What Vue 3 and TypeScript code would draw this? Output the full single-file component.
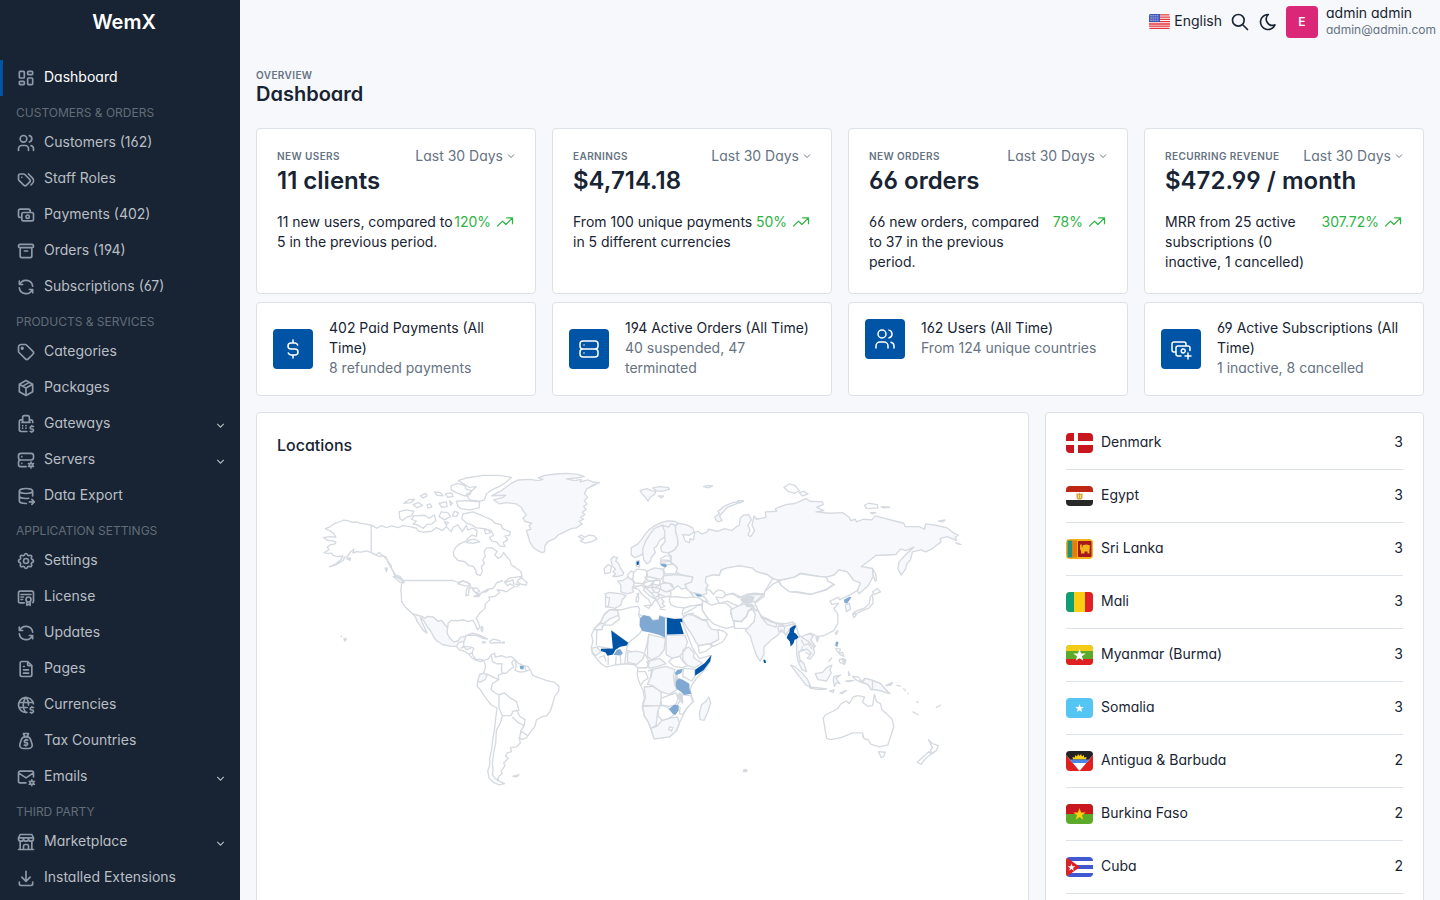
<script setup lang="ts">
import { ref } from 'vue'

interface NavItem { label: string; icon: string; active?: boolean; expandable?: boolean }
interface NavGroup { title: string; items: NavItem[] }
interface Stat { label: string; value: string; text: string; change: string }
interface Total { icon: string; title: string; detail: string }
interface Country { code: string; name: string; count: number }
interface Shape { d: string; kind: string }

const icons: Record<string, string> = {
  dashboard: 'M5 4h4a1 1 0 0 1 1 1v6a1 1 0 0 1 -1 1h-4a1 1 0 0 1 -1 -1v-6a1 1 0 0 1 1 -1 M5 16h4a1 1 0 0 1 1 1v2a1 1 0 0 1 -1 1h-4a1 1 0 0 1 -1 -1v-2a1 1 0 0 1 1 -1 M15 12h4a1 1 0 0 1 1 1v6a1 1 0 0 1 -1 1h-4a1 1 0 0 1 -1 -1v-6a1 1 0 0 1 1 -1 M15 4h4a1 1 0 0 1 1 1v2a1 1 0 0 1 -1 1h-4a1 1 0 0 1 -1 -1v-2a1 1 0 0 1 1 -1',
  users: 'M9 7m-4 0a4 4 0 1 0 8 0a4 4 0 1 0 -8 0 M3 21v-2a4 4 0 0 1 4 -4h4a4 4 0 0 1 4 4v2 M16 3.13a4 4 0 0 1 0 7.75 M21 21v-2a4 4 0 0 0 -3 -3.85',
  tags: 'M3 8v4.172a2 2 0 0 0 .586 1.414l5.71 5.71a2.41 2.41 0 0 0 3.408 0l3.592 -3.592a2.41 2.41 0 0 0 0 -3.408l-5.71 -5.71a2 2 0 0 0 -1.414 -.586h-4.172a2 2 0 0 0 -2 2z M18 19l1.592 -1.592a4.82 4.82 0 0 0 0 -6.816l-4.592 -4.592 M7 10h-.01',
  cash: 'M7 11a2 2 0 0 1 2 -2h10a2 2 0 0 1 2 2v6a2 2 0 0 1 -2 2h-10a2 2 0 0 1 -2 -2z M12 14a2 2 0 1 0 4 0a2 2 0 1 0 -4 0 M17 9v-2a2 2 0 0 0 -2 -2h-10a2 2 0 0 0 -2 2v6a2 2 0 0 0 2 2h2',
  archive: 'M3 6a2 2 0 0 1 2 -2h14a2 2 0 0 1 2 2a2 2 0 0 1 -2 2h-14a2 2 0 0 1 -2 -2z M5 8v10a2 2 0 0 0 2 2h10a2 2 0 0 0 2 -2v-10 M10 12l4 0',
  refresh: 'M20 11a8.1 8.1 0 0 0 -15.5 -2m-.5 -4v4h4 M4 13a8.1 8.1 0 0 0 15.5 2m.5 4v-4h-4',
  tag: 'M6.5 7.5a1 1 0 1 0 2 0a1 1 0 1 0 -2 0 M3 6v5.172a2 2 0 0 0 .586 1.414l7.71 7.71a2.41 2.41 0 0 0 3.408 0l5.592 -5.592a2.41 2.41 0 0 0 0 -3.408l-7.71 -7.71a2 2 0 0 0 -1.414 -.586h-5.172a3 3 0 0 0 -3 3z',
  package: 'M12 3l8 4.5l0 9l-8 4.5l-8 -4.5l0 -9l8 -4.5 M12 12l8 -4.5 M12 12l0 9 M12 12l-8 -4.5 M16 5.25l-8 4.5',
  register: 'M21 15h-2.5a1.5 1.5 0 0 0 0 3h1a1.5 1.5 0 0 1 0 3h-2.5 M19 21v1m0 -8v1 M13 21h-7a2 2 0 0 1 -2 -2v-10a2 2 0 0 1 2 -2h2m12 3.12v-1.12a2 2 0 0 0 -2 -2h-2 M16 10v-6a2 2 0 0 0 -2 -2h-4a2 2 0 0 0 -2 2v6m8 0h-8m8 0h1m-9 0h-1 M8 14v.01 M8 17v.01 M12 13.99v.01 M12 17v.01',
  serverCog: 'M3 7a3 3 0 0 1 3 -3h12a3 3 0 0 1 3 3v2a3 3 0 0 1 -3 3h-12a3 3 0 0 1 -3 -3z M12 20h-6a3 3 0 0 1 -3 -3v-2a3 3 0 0 1 3 -3h10.5 M16 18a2 2 0 1 0 4 0a2 2 0 1 0 -4 0 M18 14.5v1.5 M18 20v1.5 M21.032 16.25l-1.299 .75 M16.27 19l-1.3 .75 M14.97 16.25l1.3 .75 M19.733 19l1.3 .75 M7 8v.01 M7 16v.01',
  databaseExport: 'M4 6c0 1.657 3.582 3 8 3s8 -1.343 8 -3s-3.582 -3 -8 -3s-8 1.343 -8 3 M4 6v6c0 1.657 3.582 3 8 3c1.118 0 2.183 -.086 3.15 -.241 M20 12v-6 M4 12v6c0 1.657 3.582 3 8 3c.157 0 .312 -.002 .466 -.005 M16 19h6 M19 16l3 3l-3 3',
  settings: 'M10.325 4.317c.426 -1.756 2.924 -1.756 3.35 0a1.724 1.724 0 0 0 2.573 1.066c1.543 -.94 3.31 .826 2.37 2.37a1.724 1.724 0 0 0 1.065 2.572c1.756 .426 1.756 2.924 0 3.35a1.724 1.724 0 0 0 -1.066 2.573c.94 1.543 -.826 3.31 -2.37 2.37a1.724 1.724 0 0 0 -2.572 1.065c-.426 1.756 -2.924 1.756 -3.35 0a1.724 1.724 0 0 0 -2.573 -1.066c-1.543 .94 -3.31 -.826 -2.37 -2.37a1.724 1.724 0 0 0 -1.065 -2.572c-1.756 -.426 -1.756 -2.924 0 -3.35a1.724 1.724 0 0 0 1.066 -2.573c-.94 -1.543 .826 -3.31 2.37 -2.37c1 .608 2.296 .07 2.572 -1.065z M9 12a3 3 0 1 0 6 0a3 3 0 0 0 -6 0',
  certificate: 'M12 15a3 3 0 1 0 6 0a3 3 0 1 0 -6 0 M13 17.5v4.5l2 -1.5l2 1.5v-4.5 M10 19h-5a2 2 0 0 1 -2 -2v-10c0 -1.1 .9 -2 2 -2h14a2 2 0 0 1 2 2v10a2 2 0 0 1 -1 1.73 M6 9l12 0 M6 12l3 0 M6 15l2 0',
  file: 'M14 3v4a1 1 0 0 0 1 1h4 M17 21h-10a2 2 0 0 1 -2 -2v-14a2 2 0 0 1 2 -2h7l5 5v11a2 2 0 0 1 -2 2z M9 9l1 0 M9 13l6 0 M9 17l6 0',
  worldDollar: 'M20.876 10.51a9 9 0 1 0 -7.839 10.43 M3.6 9h16.8 M3.6 15h9.9 M11.5 3a17 17 0 0 0 0 18 M12.5 3a16.99 16.99 0 0 1 2.578 9.02 M21 15h-2.5a1.5 1.5 0 0 0 0 3h1a1.5 1.5 0 0 1 0 3h-2.5 M19 21v1m0 -8v1',
  tax: 'M8.487 21h7.026a4 4 0 0 0 3.808 -5.224l-1.706 -5.306a5 5 0 0 0 -4.76 -3.47h-1.71a5 5 0 0 0 -4.76 3.47l-1.706 5.306a4 4 0 0 0 3.808 5.224 M15 3q-1 4 -3 4t-3 -4z M14 11h-2.5a1.5 1.5 0 0 0 0 3h1a1.5 1.5 0 0 1 0 3h-2.5 M12 10v1 M12 17v1',
  mailCog: 'M12 19h-7a2 2 0 0 1 -2 -2v-10a2 2 0 0 1 2 -2h14a2 2 0 0 1 2 2v5 M3 7l9 6l9 -6 M17 19a2 2 0 1 0 4 0a2 2 0 1 0 -4 0 M19 15.5v1.5 M19 21v1.5 M22.03 17.25l-1.3 .75 M17.27 20l-1.3 .75 M15.97 17.25l1.3 .75 M20.73 20l1.3 .75',
  store: 'M3 21l18 0 M3 7v1a3 3 0 0 0 6 0v-1m0 1a3 3 0 0 0 6 0v-1m0 1a3 3 0 0 0 6 0v-1h-18l2 -4h14l2 4 M5 21l0 -10.15 M19 21l0 -10.15 M9 21v-4a2 2 0 0 1 2 -2h2a2 2 0 0 1 2 2v4',
  download: 'M4 17v2a2 2 0 0 0 2 2h12a2 2 0 0 0 2 -2v-2 M7 11l5 5l5 -5 M12 4l0 12',
  search: 'M3 10a7 7 0 1 0 14 0a7 7 0 1 0 -14 0 M21 21l-6 -6',
  moon: 'M12 3c.132 0 .263 0 .393 0a7.5 7.5 0 0 0 7.92 12.446a9 9 0 1 1 -8.313 -12.454z',
  trending: 'M3 17l6 -6l4 4l8 -8 M14 7l7 0l0 7',
  dollar: 'M16.7 8a3 3 0 0 0 -2.7 -2h-4a3 3 0 0 0 0 6h4a3 3 0 0 1 0 6h-4a3 3 0 0 1 -2.7 -2 M12 3v3m0 12v3',
  server: 'M3 7a3 3 0 0 1 3 -3h12a3 3 0 0 1 3 3v2a3 3 0 0 1 -3 3h-12a3 3 0 0 1 -3 -3z M3 15a3 3 0 0 1 3 -3h12a3 3 0 0 1 3 3v2a3 3 0 0 1 -3 3h-12a3 3 0 0 1 -3 -3z M7 8v.01 M7 16v.01',
  cashPlus: 'M12 19h-3a2 2 0 0 1 -2 -2v-6a2 2 0 0 1 2 -2h10a2 2 0 0 1 2 2v2.5 M17 9v-2a2 2 0 0 0 -2 -2h-10a2 2 0 0 0 -2 2v6a2 2 0 0 0 2 2h2 M12.25 14a2 2 0 1 0 3.5 -1.4a2 2 0 0 0 -3.5 1.4a2 2 0 0 0 2 2 M16 19h6 M19 16v6',
  chevron: 'M6 9l6 6l6 -6',
}

const nav: NavGroup[] = [
  { title: '', items: [{ label: 'Dashboard', icon: 'dashboard', active: true }] },
  {
    title: 'Customers & Orders',
    items: [
      { label: 'Customers (162)', icon: 'users' },
      { label: 'Staff Roles', icon: 'tags' },
      { label: 'Payments (402)', icon: 'cash' },
      { label: 'Orders (194)', icon: 'archive' },
      { label: 'Subscriptions (67)', icon: 'refresh' },
    ],
  },
  {
    title: 'Products & Services',
    items: [
      { label: 'Categories', icon: 'tag' },
      { label: 'Packages', icon: 'package' },
      { label: 'Gateways', icon: 'register', expandable: true },
      { label: 'Servers', icon: 'serverCog', expandable: true },
      { label: 'Data Export', icon: 'databaseExport' },
    ],
  },
  {
    title: 'Application Settings',
    items: [
      { label: 'Settings', icon: 'settings' },
      { label: 'License', icon: 'certificate' },
      { label: 'Updates', icon: 'refresh' },
      { label: 'Pages', icon: 'file' },
      { label: 'Currencies', icon: 'worldDollar' },
      { label: 'Tax Countries', icon: 'tax' },
      { label: 'Emails', icon: 'mailCog', expandable: true },
    ],
  },
  {
    title: 'Third Party',
    items: [
      { label: 'Marketplace', icon: 'store', expandable: true },
      { label: 'Installed Extensions', icon: 'download' },
    ],
  },
]

const period = ref('Last 30 Days')

const stats: Stat[] = [
  { label: 'New users', value: '11 clients', text: '11 new users, compared to 5 in the previous period.', change: '120%' },
  { label: 'Earnings', value: '$4,714.18', text: 'From 100 unique payments in 5 different currencies', change: '50%' },
  { label: 'New orders', value: '66 orders', text: '66 new orders, compared to 37 in the previous period.', change: '78%' },
  { label: 'Recurring revenue', value: '$472.99 / month', text: 'MRR from 25 active subscriptions (0 inactive, 1 cancelled)', change: '307.72%' },
]

const totals: Total[] = [
  { icon: 'dollar', title: '402 Paid Payments (All Time)', detail: '8 refunded payments' },
  { icon: 'server', title: '194 Active Orders (All Time)', detail: '40 suspended, 47 terminated' },
  { icon: 'users', title: '162 Users (All Time)', detail: 'From 124 unique countries' },
  { icon: 'cashPlus', title: '69 Active Subscriptions (All Time)', detail: '1 inactive, 8 cancelled' },
]

const countries: Country[] = [
  { code: 'dk', name: 'Denmark', count: 3 },
  { code: 'eg', name: 'Egypt', count: 3 },
  { code: 'lk', name: 'Sri Lanka', count: 3 },
  { code: 'ml', name: 'Mali', count: 3 },
  { code: 'mm', name: 'Myanmar (Burma)', count: 3 },
  { code: 'so', name: 'Somalia', count: 3 },
  { code: 'ag', name: 'Antigua & Barbuda', count: 2 },
  { code: 'bf', name: 'Burkina Faso', count: 2 },
  { code: 'cu', name: 'Cuba', count: 2 },
]

/* kind: w = no data, g = one visitor, l = two visitors, b = three visitors, n = border line */
const americas: Shape[] = [
  { kind: 'w', d: 'M184 196L165 192 150 190 140 186 125 187 114 182 100 181 85 187 70 193 58 202 46 206 62 214 72 222 78 232 60 230 40 233 52 241 70 243 78 247 75 252 60 255 52 262 57 270 42 278 55 281 65 280 70 287 85 290 99 288 93 300 78 312 58 321 80 314 100 302 104 292 112 290 120 278 132 268 129 280 140 275 155 277 170 273 184 278 200 285 208 278 218 287 228 291 234 305 243 315 246 328 256 344 270 350 280 362 275 375 273 390 275 410 275 425 285 440 297 452 310 463 330 468 345 475 355 470 370 472 385 485 395 482 405 495 414 504 415 490 425 482 445 483 460 480 475 485 490 482 497 495 503 510 511 503 505 485 499 476 510 460 527 445 526 433 540 420 537 412 555 410 570 398 562 390 578 392 590 396 605 386 615 380 602 372 594 378 584 366 600 355 618 352 637 350 634 335 620 325 605 315 600 300 590 290 582 278 575 290 565 295 555 285 562 275 545 263 530 265 523 275 527 290 519 300 524 312 515 320 518 335 512 347 500 343 498 330 490 320 475 316 465 305 445 302 432 288 431 275 438 262 450 252 470 243 475 235 487 225 500 230 502 212 490 205 474 210 470 196 458 215 444 195 430 202 424 216 410 200 398 212 380 203 366 214 340 217 325 213 320 205 300 200 280 197 265 203 245 198 230 203 215 197 200 205 190 198Z' },
  { kind: 'n', d: 'M184 196V278 M188 280L206 290 220 288 232 300 240 318 250 334 254 346 276 358M280 362H430L445 368 458 364 472 368 482 376 476 382 470 390 468 408 476 406 478 388 486 382 490 390 498 398 504 404 495 410M504 404L520 398 534 388 550 386 562 368 580 362' },
  { kind: 'n', d: 'M444 372L460 362 478 370 482 378 466 378Z M488 386L500 384 510 394 500 400 494 396Z M492 410L512 404 508 410Z M518 396L536 390 530 396Z M588 368L610 360 612 372 630 374 618 382' },
  { kind: 'w', d: 'M622 366L634 352 642 360 652 368 650 376 636 374Z M226 325L232 324 230 336Z M250 350L262 352 284 368 272 368Z M110 296L122 294 120 302Z' },
  { kind: 'w', d: 'M268 155L290 150 312 154 305 168 290 172 278 182 270 176Z M312 168L345 166 358 175 374 165 378 182 366 192 352 194 340 205 325 196 310 192 320 184 305 178Z M388 170L394 156 414 158 422 170 404 180Z M428 168L434 154 446 158 440 170Z M282 130L296 120 314 118 304 128Z M310 134L326 128 338 136 322 143Z M332 108L348 100 352 108 340 114Z M374 96L392 98 400 108 382 106Z M352 134L362 132 366 142 354 144Z M388 130L410 126 412 140 396 142Z M420 122L428 130 422 136Z M406 102L425 98 430 110 414 112Z M404 185L416 188 410 196Z' },
  { kind: 'w', d: 'M424 78L444 70 464 76 470 88 486 92 480 104 464 108 440 98 424 90Z M446 62L470 54 520 46 570 46 605 52 590 66 568 80 546 90 530 102 524 120 508 124 480 120 470 104 482 96 500 80 478 82Z M440 124L470 122 510 126 508 144 480 150 452 146 444 138Z M470 160L490 156 510 164 528 172 546 180 556 190 574 194 578 206 602 216 600 226 586 228 594 240 580 248 586 260 570 258 560 246 546 244 540 232 552 226 544 212 524 206 500 204 488 196 470 190 456 176 460 162Z M524 210L536 210 542 218 528 222Z M480 240L496 238 510 246 492 250 470 248Z' },
  { kind: 'g', d: 'M310 463L330 468 345 475 355 470 370 472 385 485 395 482 405 495 413 504 412 520 420 535 432 547 445 543 452 532 468 530 464 543 455 552 440 560 425 560 400 555 380 543 372 532 364 516 352 500 340 480 332 474 338 490 352 520 340 512 330 496 322 486 318 474Z' },
  { kind: 'w', d: 'M440 560L448 548 462 545 462 560 484 562 492 566 487 580 492 592 502 600 510 598 522 602 512 606 500 602 488 596 476 582 462 574 448 570Z' },
  { kind: 'n', d: 'M452 566L462 560 470 570 484 566M476 582L488 580' },
  { kind: 'w', d: 'M468 528L488 520 510 526 534 538 520 536 500 527 484 526Z M540 544L552 538 570 543 572 549 556 549 542 550Z M518 546L528 548 520 550Z M577 547H584V550H577Z M516 500L520 504 518 516 514 510Z' },
  { kind: 'w', d: 'M522 602L535 598 545 585 555 580 556 592 575 588 590 593 605 590 612 596 625 610 640 617 655 620 663 632 668 646 690 655 710 662 735 668 748 680 747 695 735 710 730 730 723 752 712 768 695 772 680 782 676 800 662 818 650 835 637 840 628 834 632 850 620 862 602 864 606 876 592 880 588 890 596 896 582 910 586 918 574 935 578 942 568 950 562 962 585 972 568 976 550 968 538 955 534 935 540 915 540 895 546 870 549 840 555 805 558 775 562 745 545 736 532 720 518 700 512 690 502 680 504 664 510 656 510 645 522 640 528 620Z' },
  { kind: 'g', d: 'M510 645L522 640 532 648 526 660 510 668 504 662Z' },
  { kind: 'n', d: 'M545 586L548 606 560 612 577 612 575 630 578 642 566 646 567 660 550 652 530 642M578 640L590 641 600 630 612 622 606 608 616 598M616 600L620 618 616 632 632 637 646 636 660 630M644 618L650 634M567 660L548 672 544 690 556 700 568 705 568 744 578 768 572 790 560 812 558 850 552 880 548 910 550 930 548 945 558 958 568 960M568 705L585 700 600 714 620 725 628 752 610 755 604 768 576 768M606 756L622 752 630 770 646 780 644 797 626 790 608 772M644 797L634 812 630 834M634 814L654 828' },
  { kind: 'l', d: 'M630 618L642 618 642 629 632 629Z' },
  { kind: 'g', d: 'M545 108L575 92 605 70 625 60 660 58 685 62 700 58 686 54 705 46 740 42 770 40 805 43 824 50 800 54 770 57 795 62 815 58 812 66 835 60 850 66 870 68 845 78 858 74 832 86 825 100 834 112 824 122 832 132 822 140 830 148 818 158 826 164 812 172 822 178 808 184 818 192 800 204 785 206 765 216 748 224 735 236 715 245 706 258 705 275 698 278 684 272 670 262 660 245 655 226 650 212 664 208 658 198 666 190 645 184 640 175 650 165 640 152 635 142 620 132 590 128 570 132 552 120 580 112 588 106Z' },
  { kind: 'w', d: 'M806 230L816 226 824 232 840 226 854 228 862 238 845 246 826 250 812 242 822 238Z M92 528L96 532M102 536L110 538 104 544Z M610 950L628 946 620 952Z' },
]

const africaEurope: Shape[] = [
  { kind: 'g', d: 'M242 92L262 86 275 92 290 94 284 104 272 112 266 124 256 110 246 100Z M280 84L300 80 326 82 330 88 306 94 290 92Z M296 108L312 108 306 114Z M432 80L446 76 460 78 446 84Z M470 180L466 172 480 160 476 154 496 138 520 128 552 122 530 132 504 142 490 158 480 168 488 182 476 186Z' },
  { kind: 'g', d: 'M215 264L235 252 245 240 258 222 270 208 285 198 305 188 325 183 345 184 357 190 348 198 348 215 354 235 355 255 345 270 325 280 306 275 304 260 318 244 314 232 300 242 292 258 283 266 288 278 276 292 272 305 262 312 253 300 250 282 240 288 225 293 215 285Z' },
  { kind: 'n', d: 'M250 284L250 265 258 245 270 225 284 206 308 196M308 196L316 215 316 234M308 196L328 202 334 192 348 196' },
  { kind: 'w', d: 'M304 296L318 288 332 288 334 304 322 306 304 306Z M304 300L330 302 336 312 322 320 302 312Z' },
  { kind: 'g', d: 'M154 298L162 290 174 294 168 304 178 312 182 324 192 338 190 346 174 350 160 350 168 342 160 336 168 328 158 318Z' },
  { kind: 'w', d: 'M134 326L146 314 156 320 152 338 136 342Z' },
  { kind: 'w', d: 'M204 346L214 334 222 336 220 358 208 356Z M222 340L232 328 256 330 262 336 262 354 250 372 228 370 220 360Z M230 318L230 304 240 302 240 322Z M250 372L262 366 282 362 282 374 264 380 246 380 222 378 222 370 238 370Z M256 352L276 348 294 356 284 364 266 362Z M274 374L286 362 302 362 300 376 284 384Z' },
  { kind: 'g', d: 'M174 364L190 362 204 352 220 362 224 372 218 386 222 396 204 402 184 396 184 376Z M136 402L150 398 186 402 200 408 188 420 184 436 166 446 150 442 140 442 144 420Z M262 334L286 324 310 328 314 346 306 358 290 356 264 350Z M304 372L328 368 344 388 318 396 302 388Z' },
  { kind: 'w', d: 'M138 412L150 414 146 440 138 440Z M312 328L324 314 344 314 354 326 348 342 316 342Z' },
  { kind: 'g', d: 'M312 348L350 344 362 346 400 352 396 366 376 374 382 384 366 388 356 378 344 386 336 372 310 366Z' },
  { kind: 'w', d: 'M222 384L246 376 256 384 252 390 268 406 290 420 284 424 276 438 268 420 248 404 236 388Z M254 438L274 436 268 446Z M230 412L238 412 236 426 230 426Z M232 402L238 400 236 410Z' },
  { kind: 'g', d: 'M258 384L276 382 300 386 318 396 334 394 334 408 316 412 304 414 314 426 308 430 316 440 304 444 296 430 288 416 276 400Z' },
  { kind: 'n', d: 'M276 382L284 396 276 400M284 396L296 400 302 388M288 414L300 404 316 410M296 400L300 414 290 424M250 372L262 384M282 374L300 376M300 448L318 450' },
  { kind: 'w', d: 'M330 412L346 410 378 414 410 410 426 416 432 432 410 436 394 438 376 444 352 442 336 436 330 424Z M372 448L382 446 376 452Z' },
  { kind: 'g', d: 'M392 398L420 402 436 412 446 426 432 424 418 414 404 412Z' },
  { kind: 'l', d: 'M406 402L424 405 428 410 414 410Z M304 311L320 312 322 320 314 322 304 316Z' },
  { kind: 'w', d: 'M440 352L460 345 480 347 486 330 504 324 540 318 580 325 590 335 625 345 640 357 618 392 614 402 585 400 560 404 544 412 520 400 500 406 492 394 478 390 468 396 462 404 452 392 440 388 446 376 438 366Z' },
  { kind: 'w', d: 'M470 412L490 414 500 406 520 402 540 414 556 410 566 420 548 430 540 440 520 432 504 424 490 428 480 432Z' },
  { kind: 'g', d: 'M546 414L570 404 612 404 590 424 574 428 560 424Z' },
  { kind: 'w', d: 'M430 422L444 430 458 436 476 430 500 430 516 444 514 462 522 480 526 500 500 506 482 500 462 492 448 478 438 466 428 448Z' },
  { kind: 'g', d: 'M514 450L534 440 552 432 566 436 584 440 566 454 560 470 544 486 520 482Z' },
  { kind: 'w', d: 'M524 484L546 486 562 470 568 454 584 446 600 456 596 470 584 486 576 500 574 514 556 506 526 506Z' },
  { kind: 'w', d: 'M372 446L396 438 428 436 428 450 438 466 448 480 430 480 410 468 388 462 372 470 368 460Z' },
  { kind: 'n', d: 'M372 462L392 452 412 440M390 462L404 460' },
  { kind: 'g', d: 'M368 476L384 464 400 466 426 480 442 484 448 498 456 508 476 512 488 524 476 540 452 552 420 560 410 548 396 522 380 500Z' },
  { kind: 'w', d: 'M416 558L450 552 458 560 440 574 420 580Z M476 510L492 514 504 524 490 546 462 560 454 552 478 540Z' },
  { kind: 'w', d: 'M150 450L185 450 215 442 236 440 240 448 238 462 250 470 270 470 280 482 298 478 300 468 320 474 345 478 366 476 374 500 386 530 398 562 410 582 420 597 455 587 452 605 432 635 412 655 398 675 392 690 397 712 402 725 382 745 372 765 362 785 352 812 330 832 306 834 285 838 278 820 268 790 255 770 248 740 255 715 250 690 238 665 233 645 235 625 225 615 200 612 170 615 140 622 125 612 110 595 98 580 95 565 100 545 96 525 105 505 125 485 135 462Z' },
  { kind: 'g', d: 'M150 450L174 452 178 466 150 478 136 490 120 492 134 466Z M106 510L128 510 128 500 138 494 124 490 108 502Z M96 565L112 562 124 576 108 588 100 580Z M204 578L230 574 256 580 250 598 232 614 204 608Z M268 524L318 536 314 570 300 588 276 600 264 590 264 560Z M320 526L376 526 384 546 376 572 360 590 338 596 320 584Z M262 606L300 596 320 612 296 620 270 626Z M276 630L320 620 346 630 342 650 346 676 352 690 330 704 304 696 280 678 264 674 274 652Z M254 682L280 680 304 696 306 714 302 738 250 738 258 712Z M250 740L302 738 294 760 290 798 274 806 266 786 254 768Z M274 806L292 800 308 782 328 776 354 772 360 790 350 814 330 832 300 836 284 838Z M370 570L388 562 404 580 402 594 428 610 406 624 384 618 370 600Z' },
  { kind: 'w', d: 'M338 596L362 590 370 604 384 618 368 624 344 620 328 606Z M302 738L320 740 334 752 344 766 328 776 308 782 296 770 296 752Z M304 716L330 706 350 700 356 718 348 736 328 740 306 736Z M356 704L394 708 400 726 380 748 370 764 360 762 362 744 352 738 362 724Z M372 626L406 628 406 652 396 664 370 650Z M330 802L340 804 336 814 328 810Z' },
  { kind: 'n', d: 'M176 464L180 478 156 496 138 496M155 512L206 550 240 522 246 512M236 462L242 476M206 550L200 572 216 576M256 576L262 556 268 522M110 558L112 510M112 560L150 566M118 594L134 588 140 606M146 590L146 616M170 590L168 614M182 588L184 612M200 574L196 610M236 624L262 624 270 608 256 582M236 636L258 636 266 656 252 664 244 676M266 634L280 630 274 652M360 700L368 730' },
  { kind: 'd', d: 'M352 640L346 656 348 672 354 660Z M360 700L368 706 370 730 364 722Z' },
  { kind: 'g', d: 'M448 712L454 730 444 760 434 782 422 780 420 762 426 736 440 724Z' },
  { kind: 'l', d: 'M241 476L252 466 270 470 280 482 298 480 300 468 317 474 317 534 300 526 272 518 248 514 240 498Z M162 586L172 570 182 568 190 580 184 587Z M346 640L354 630 370 628 366 640 350 647Z M350 664L358 656 370 660 390 672 390 686 396 702 374 706 364 696 352 688 348 676Z M328 748L344 735 357 737 358 752 348 766 340 762Z' },
  { kind: 'b', d: 'M322 474L345 478 368 477 369 488 362 486 373 523 322 524Z M155 512L206 549 202 557 182 561 168 570 160 584 144 588 138 578 124 574 124 567 160 566Z M456 586L452 605 432 632 407 648 407 630 436 610Z M231 306L238 304 238 314 232 316Z' },
]

const russia: Shape[] = [
  { kind: 'g', d: 'M-185 190L-160 194 -140 204 -136 216 -150 226 -170 224 -162 244 -150 248 -148 236 -138 240 -134 218 -126 214 -112 222 -96 216 -94 208 -64 214 -44 206 -22 212 -8 200 0 196 2 176 12 166 28 164 36 180 26 196 32 210 26 226 34 230 46 212 38 196 44 168 52 178 80 172 78 156 112 154 108 146 140 134 170 130 186 122 200 116 212 124 250 126 252 134 232 142 254 152 230 156 270 160 310 158 330 172 334 182 348 178 352 186 372 178 398 180 408 168 440 176 470 184 494 190 498 200 540 200 556 208 560 192 590 196 624 204 642 218 658 226 648 232 652 242 624 230 602 236 606 246 580 266 560 276 545 270 520 276 514 300 502 314 500 326 486 346 476 326 480 306 500 284 524 262 500 272 484 268 470 284 410 287 388 304 366 320 400 326 402 350 388 376 360 402 354 392 362 370 344 362 324 336 300 330 284 346 262 352 240 350 184 340 166 352 120 362 100 356 84 344 50 336 40 326 0 318 -36 324 -54 330 -60 347 -80 345 -100 352 -102 366 -94 376 -100 388 -98 402 -116 406 -148 396 -160 386 -164 374 -144 366 -140 352 -178 344 -190 336 -188 322 -206 306 -204 290 -214 280 -195 270 -185 255 -186 235 -192 215 -192 198Z' },
]

const asiaPacific: Shape[] = [
  { kind: 'w', d: 'M400 326L410 344 412 362 408 364 402 346Z M134 82L150 72 166 76 180 92 166 100 146 94Z M180 98L192 94 206 102 190 108Z M376 136L388 130 414 134 416 144 382 146Z M426 140L452 142 434 144Z M394 158L410 158 400 162Z M598 184L618 180 610 186Z M650 248L666 254 656 252Z M-4 122L12 124 0 130Z' },
  { kind: 'w', d: 'M120 362L166 352 184 342 240 350 262 352 266 364 284 372 262 388 216 404 176 396 150 396 126 378Z' },
  { kind: 'w', d: 'M46 430L74 410 76 396 102 372 118 364 126 378 150 396 176 398 216 404 262 390 286 374 266 364 262 352 284 346 300 330 324 336 344 362 364 370 354 392 338 402 318 412 300 420 298 412 272 424 278 434 298 430 284 446 296 464 296 490 284 512 254 528 234 530 214 520 198 526 184 532 176 520 172 500 160 486 138 492 110 490 80 478 62 464Z' },
  { kind: 'g', d: 'M40 450L58 454 66 472 94 486 120 492 136 500 168 490 152 506 140 526 126 510 116 526 96 540 74 562 74 584 62 604 50 584 36 542 34 530 18 512 44 486 48 464Z' },
  { kind: 'n', d: 'M66 472L82 476 112 492 110 502 84 494Z M116 500L136 500 134 518 118 514Z M118 496L134 492' },
  { kind: 'd', d: 'M4 420L30 408 44 412 38 424 18 430Z M18 430L38 434 44 442 22 440Z' },
  { kind: 'g', d: 'M318 436L330 430 334 448 322 456Z' },
  { kind: 'w', d: 'M400 396L414 386 424 396 406 404Z M400 404L402 430 390 444 372 452 354 460 340 462 350 454 374 446 390 432 394 410Z M340 462L352 464 344 474Z M288 520L296 512 292 524Z M230 534L238 534 234 546Z' },
  { kind: 'l', d: 'M314 420L332 410 336 414 324 430 316 430Z M290 546L298 546 294 562 288 558Z' },
  { kind: 'g', d: 'M172 536L184 530 206 544 222 560 226 580 212 598 204 596 216 580 202 568 186 572 178 578 182 600 194 612 202 636 188 630 176 604 172 580Z M198 526L212 522 222 530 214 540 228 560 220 566' },
  { kind: 'n', d: 'M186 540L194 556 208 552 218 568M190 560L186 574 200 570M198 578L212 584M178 606L186 604' },
  { kind: 'g', d: 'M154 616L166 620 186 638 204 658 214 680 200 676 180 650Z M210 682L232 684 262 688 240 690 214 686Z M228 642L250 638 264 622 278 616 272 630 276 640 262 664 236 660Z M284 650L304 646 290 656 302 672 292 668 286 680 282 662Z' },
  { kind: 'w', d: 'M272 694L284 690 282 698Z M302 700L322 692 308 702Z M320 664L344 662 330 666Z M328 636L332 646 328 648Z M290 566L304 568 300 580 310 578 314 590 302 584 292 572Z M300 600L312 596 320 602 316 614 302 608Z M278 594L268 606M340 650L358 652 366 666 378 656 400 662 424 672 434 684 452 702 428 694 410 690 396 690 386 674 366 668 350 660Z M440 678L460 668 456 676Z M472 676L486 680M492 686L500 694M506 700L508 704' },
  { kind: 'g', d: 'M378 656L400 662 424 672 434 684 452 702 428 694 410 690 396 690 386 674 370 668Z' },
  { kind: 'n', d: 'M400 662V690M532 724L538 730M590 744L606 736M520 756L538 766' },
  { kind: 'd', d: 'M308 598L318 602 314 610Z M14 930H22V936H12Z M370 830L384 828 382 840Z' },
  { kind: 'w', d: 'M406 704L412 726 424 732 428 750 442 762 458 778 464 800 456 826 446 856 420 862 396 854 386 840 374 836 370 820 340 820 306 834 274 840 262 836 256 800 252 776 258 766 294 748 306 732 322 724 330 732 342 712 356 708 376 712 370 728 386 740 400 738Z M418 876L438 878 434 890 426 894Z M568 840L580 852 598 858 592 872 580 882 574 872 580 864Z M570 876L576 884 560 896 546 914 534 908 550 894Z' },
  { kind: 'b', d: 'M160 500L168 496 170 502 165 510 164 518 170 522 178 532 172 538 166 540 162 552 154 560 152 546 142 534 146 524 150 518 152 506Z M72 600L78 600 80 610 74 610Z' },
]

const mapLayers = [
  { offset: 99, shapes: americas },
  { offset: 1389, shapes: russia },
  { offset: 849, shapes: africaEurope },
  { offset: 1389, shapes: asiaPacific },
]

const star = 'M0 -5L1.2 -1.6 4.8 -1.5 1.9 .6 2.9 4 0 2 -2.9 4 -1.9 .6 -4.8 -1.5 -1.2 -1.6Z'
</script>

<template>
  <div class="layout">
    <aside class="sidebar">
      <a class="brand" href="#">WemX</a>
      <nav>
        <div v-for="group in nav" :key="group.title">
          <h2 v-if="group.title" class="nav-title">{{ group.title }}</h2>
          <a v-for="item in group.items" :key="item.label" href="#" class="nav-link" :class="{ active: item.active }">
            <svg class="icon" viewBox="0 0 24 24"><path :d="icons[item.icon]" /></svg>
            <span>{{ item.label }}</span>
            <svg v-if="item.expandable" class="chevron" viewBox="0 0 24 24"><path :d="icons.chevron" /></svg>
          </a>
        </div>
      </nav>
    </aside>

    <div class="page">
      <header class="topbar">
        <button class="language" type="button">
          <svg class="flag-us" viewBox="0 0 21 15">
            <rect width="21" height="15" rx="2" fill="#fff" />
            <path d="M1 .8H20M0 3.1H21M0 5.4H21M0 7.7H21M0 10H21M0 12.2H21M1 14.4H20" stroke="#e3343c" stroke-width="1.3" />
            <path d="M2 0H11V8H0V2A2 2 0 0 1 2 0Z" fill="#3e55b5" />
            <path d="M1.5 1.8H10M1.5 4H10M1.5 6.2H10" stroke="#c9d0f0" stroke-width=".8" stroke-dasharray="1 1.2" />
          </svg>
          <span>English</span>
        </button>
        <button class="icon-button" type="button" aria-label="Search"><svg viewBox="0 0 24 24"><path :d="icons.search" /></svg></button>
        <button class="icon-button" type="button" aria-label="Dark mode"><svg viewBox="0 0 24 24"><path :d="icons.moon" /></svg></button>
        <a class="account" href="#">
          <span class="avatar">E</span>
          <span class="who">
            <span class="name">admin admin</span>
            <span class="email">admin@admin.com</span>
          </span>
        </a>
      </header>

      <main>
        <div class="heading">
          <div class="subheader">Overview</div>
          <h1>Dashboard</h1>
        </div>

        <section class="grid stats">
          <article v-for="stat in stats" :key="stat.label" class="card stat">
            <div class="stat-top">
              <span class="subheader">{{ stat.label }}</span>
              <button class="period" type="button">
                {{ period }}<svg viewBox="0 0 24 24"><path :d="icons.chevron" /></svg>
              </button>
            </div>
            <div class="value">{{ stat.value }}</div>
            <div class="stat-body">
              <span>{{ stat.text }}</span>
              <span class="change">{{ stat.change }}<svg viewBox="0 0 24 24"><path :d="icons.trending" /></svg></span>
            </div>
          </article>
        </section>

        <section class="grid totals">
          <article v-for="total in totals" :key="total.title" class="card total">
            <div class="total-row">
              <span class="badge"><svg viewBox="0 0 24 24"><path :d="icons[total.icon]" /></svg></span>
              <div class="total-text">
                <div>{{ total.title }}</div>
                <div class="muted">{{ total.detail }}</div>
              </div>
            </div>
          </article>
        </section>

        <section class="bottom">
          <article class="card locations">
            <h3>Locations</h3>
            <svg class="map" viewBox="0 -9 2196 1250" role="img" aria-label="World map of visitors">
              <g v-for="(layer, i) in mapLayers" :key="i" :transform="`translate(${layer.offset} 0)`">
                <path v-for="(shape, j) in layer.shapes" :key="j" :d="shape.d" :class="'k-' + shape.kind" />
              </g>
            </svg>
          </article>

          <article class="card">
            <ul class="countries">
              <li v-for="c in countries" :key="c.code">
                <svg class="flag" viewBox="0 0 27 20">
                  <template v-if="c.code === 'dk'"><rect width="27" height="20" fill="#c8171e" /><path d="M0 10H27M10 0V20" stroke="#fff" stroke-width="4" /></template>
                  <template v-else-if="c.code === 'eg'"><rect width="27" height="20" fill="#fff" /><rect width="27" height="6" fill="#bf2714" /><rect y="14" width="27" height="6" fill="#282828" /><path d="M10.5 7L12.5 8 13.5 6.5 14.5 8 16.5 7 16.5 12 15 13.5H12L10.5 12Z" fill="#d8a43a" /><path d="M12.5 9V12M14.5 9V12" stroke="#f3dfa6" /></template>
                  <template v-else-if="c.code === 'lk'"><rect width="27" height="20" fill="#f5b31b" /><rect x="1.5" y="1.5" width="5" height="17" fill="#22907a" /><rect x="6.5" y="1.5" width="4.5" height="17" fill="#ec7a08" /><rect x="12" y="2" width="13.5" height="16" rx="1" fill="#a5181c" /><path d="M14 6L15.5 5 16 9 17 6 21 5.500 24 6.5 23.5 11 23.5 14.5H21.5V12.5H18.5V14.5H15V12L14 10Z" fill="#f5b31b" /></template>
                  <template v-else-if="c.code === 'ml'"><rect width="27" height="20" fill="#fccd10" /><rect width="8" height="20" fill="#0d9e74" /><rect x="19" width="8" height="20" fill="#e01f26" /></template>
                  <template v-else-if="c.code === 'mm'"><rect width="27" height="20" fill="#5caa2a" /><rect width="27" height="6" fill="#f4cb16" /><rect y="14" width="27" height="6" fill="#e02020" /><path :d="star" transform="translate(13.5 10.5) scale(1.3)" fill="#fff" /></template>
                  <template v-else-if="c.code === 'so'"><rect width="27" height="20" fill="#55c5f3" /><path :d="star" transform="translate(13.5 10.5) scale(.9)" fill="#fff" /></template>
                  <template v-else-if="c.code === 'ag'"><rect width="27" height="20" fill="#e02020" /><path d="M0 0H27V4L13.5 20 0 4Z" fill="#fff" /><path d="M0 0H27V4L22.5 9H4.5L0 4Z" fill="#222" /><path d="M7 8.5L6.5 6 9 6.5 9 4 11 5.5 12 3 13.5 5 15 3 16 5.5 18 4 18 6.5 20.5 6 20 8.5Z" fill="#fbcf10" /><path d="M4 8.5H23L20.5 12H6.5Z" fill="#4a86e8" /></template>
                  <template v-else-if="c.code === 'bf'"><rect width="27" height="20" fill="#5caa2a" /><rect width="27" height="10" fill="#c8171e" /><path :d="star" transform="translate(13.5 10.5) scale(1.3)" fill="#fbcf10" /></template>
                  <template v-else><rect width="27" height="20" fill="#fff" /><path d="M0 2H27M0 10H27M0 18H27" stroke="#4059d0" stroke-width="4" /><path d="M0 0L14 10 0 20Z" fill="#dd2025" /><path :d="star" transform="translate(5.5 10.5) scale(.8)" fill="#fff" /></template>
                </svg>
                <span>{{ c.name }}</span>
                <span class="count">{{ c.count }}</span>
              </li>
            </ul>
          </article>
        </section>
      </main>
    </div>
  </div>
</template>

<style>
body { margin: 0; }
</style>

<style scoped>
* { box-sizing: border-box; }
.layout {
  display: flex;
  height: 100vh;
  overflow: hidden;
  background: #f6f8fb;
  color: #182433;
  font: 400 14px/20px Inter, "Liberation Sans", sans-serif;
  font-feature-settings: "cv03", "cv04", "cv11";
}
a { color: inherit; text-decoration: none; }
button { padding: 0; border: 0; background: none; color: inherit; font: inherit; font-feature-settings: inherit; cursor: pointer; }
svg { display: block; flex: none; fill: none; }
h1, h2, h3, ul { margin: 0; padding: 0; }

.sidebar { flex: none; width: 240px; overflow: hidden; background: #182433; color: #b9bec5; }
.brand { display: block; height: 60px; padding-left: 8px; color: #fff; font-size: 20px; font-weight: 600; line-height: 44px; text-align: center; }
.nav-title { height: 29px; padding: 7px 16px 0; color: #626c79; font-size: 12px; font-weight: 400; line-height: 20px; text-transform: uppercase; }
.nav-link { display: flex; align-items: center; gap: 8px; height: 36px; padding: 0 13px; border-left: 3px solid transparent; }
.nav-link span { padding-bottom: 2px; }
.nav-link.active { border-left-color: #0054a6; color: #fff; }
.icon { width: 20px; height: 20px; stroke: #8f9aa8; stroke-width: 2; stroke-linecap: round; stroke-linejoin: round; }
.chevron { width: 13px; height: 13px; margin: 3px 0 0 auto; stroke: #b9bec5; stroke-width: 2; }

.page { flex: 1; min-width: 0; overflow-y: auto; scrollbar-width: none; }
.topbar { display: flex; align-items: center; justify-content: flex-end; height: 44px; padding-right: 4px; }
.topbar svg { stroke-linecap: round; stroke-linejoin: round; }
.language { display: flex; align-items: center; gap: 4px; margin-right: 8px; padding-bottom: 2px; }
.flag-us { width: 21px; height: 15px; }
.icon-button { margin-right: 8px; }
.icon-button svg { width: 20px; height: 20px; stroke: #182433; stroke-width: 2; }
.account { display: flex; align-items: center; gap: 8px; }
.avatar { display: grid; place-items: center; width: 32px; height: 32px; border-radius: 4px; background: #db2777; color: #fff; font-size: 12px; font-weight: 600; }
.who { padding-bottom: 2px; }
.name, .email { display: block; }
.name { line-height: 18px; }
.email { color: #667382; font-size: 12px; line-height: 16px; }

main { padding: 23px 16px; }
.subheader { color: #667382; font-size: 10px; font-weight: 600; line-height: 16px; letter-spacing: .04em; text-transform: uppercase; }
.heading { height: 61px; }
h1 { font-size: 20px; font-weight: 600; line-height: 22px; }
.card { min-width: 0; border: 1px solid #dce1e7; border-radius: 4px; background: #fff; }
.grid { display: grid; grid-template-columns: repeat(4, minmax(0, 1fr)); gap: 16px; }
.stat { padding: 19px 20px 21px; }
.stat-top { display: flex; align-items: center; justify-content: space-between; height: 16px; }
.period { display: flex; align-items: center; gap: 2px; margin-right: -2px; color: #667382; white-space: nowrap; }
.period svg { width: 12px; height: 12px; stroke: #667382; stroke-width: 2; }
.value { margin-bottom: 14px; font-size: 24px; font-weight: 600; line-height: 34px; }
.stat-body { display: flex; align-items: flex-start; justify-content: space-between; }
.change { display: flex; align-items: center; gap: 4px; color: #2fb344; }
.change svg { width: 20px; height: 20px; stroke: #2fb344; stroke-width: 1.5; stroke-linecap: round; stroke-linejoin: round; }
.totals { margin-top: 8px; }
.total { padding: 16px; }
.total-row { display: flex; align-items: center; gap: 16px; }
.total-text { margin: -1px 0 1px; }
.badge { display: grid; flex: none; place-items: center; width: 40px; height: 40px; border-radius: 4px; background: #0054a6; }
.badge svg { width: 24px; height: 24px; stroke: #fff; stroke-width: 1.5; stroke-linecap: round; stroke-linejoin: round; }
.muted { color: #667382; }

.bottom { display: grid; grid-template-columns: minmax(0, 773fr) minmax(0, 379fr); gap: 16px; min-height: 560px; margin-top: 16px; }
.locations { padding: 20px; }
h3 { font-size: 16px; font-weight: 500; line-height: 24px; }
.map { width: 100%; height: auto; }
.map path { stroke: #d5dae0; stroke-width: 4; stroke-linejoin: round; }
.map .k-w { fill: #fff; }
.map .k-g { fill: #f6f8fb; }
.map .k-d { fill: #d5dae0; }
.map .k-n { fill: none; }
.map .k-l { fill: #7fa9d2; stroke: none; }
.map .k-b { fill: #0054a6; stroke: none; }

.countries { padding: 4px 20px; list-style: none; }
.countries li { display: flex; align-items: center; gap: 8px; height: 53px; border-bottom: 1px solid #dce1e7; }
.countries span { padding-bottom: 2px; }
.flag { width: 27px; height: 20px; border-radius: 4px; overflow: hidden; }
.count { margin-left: auto; }
</style>
